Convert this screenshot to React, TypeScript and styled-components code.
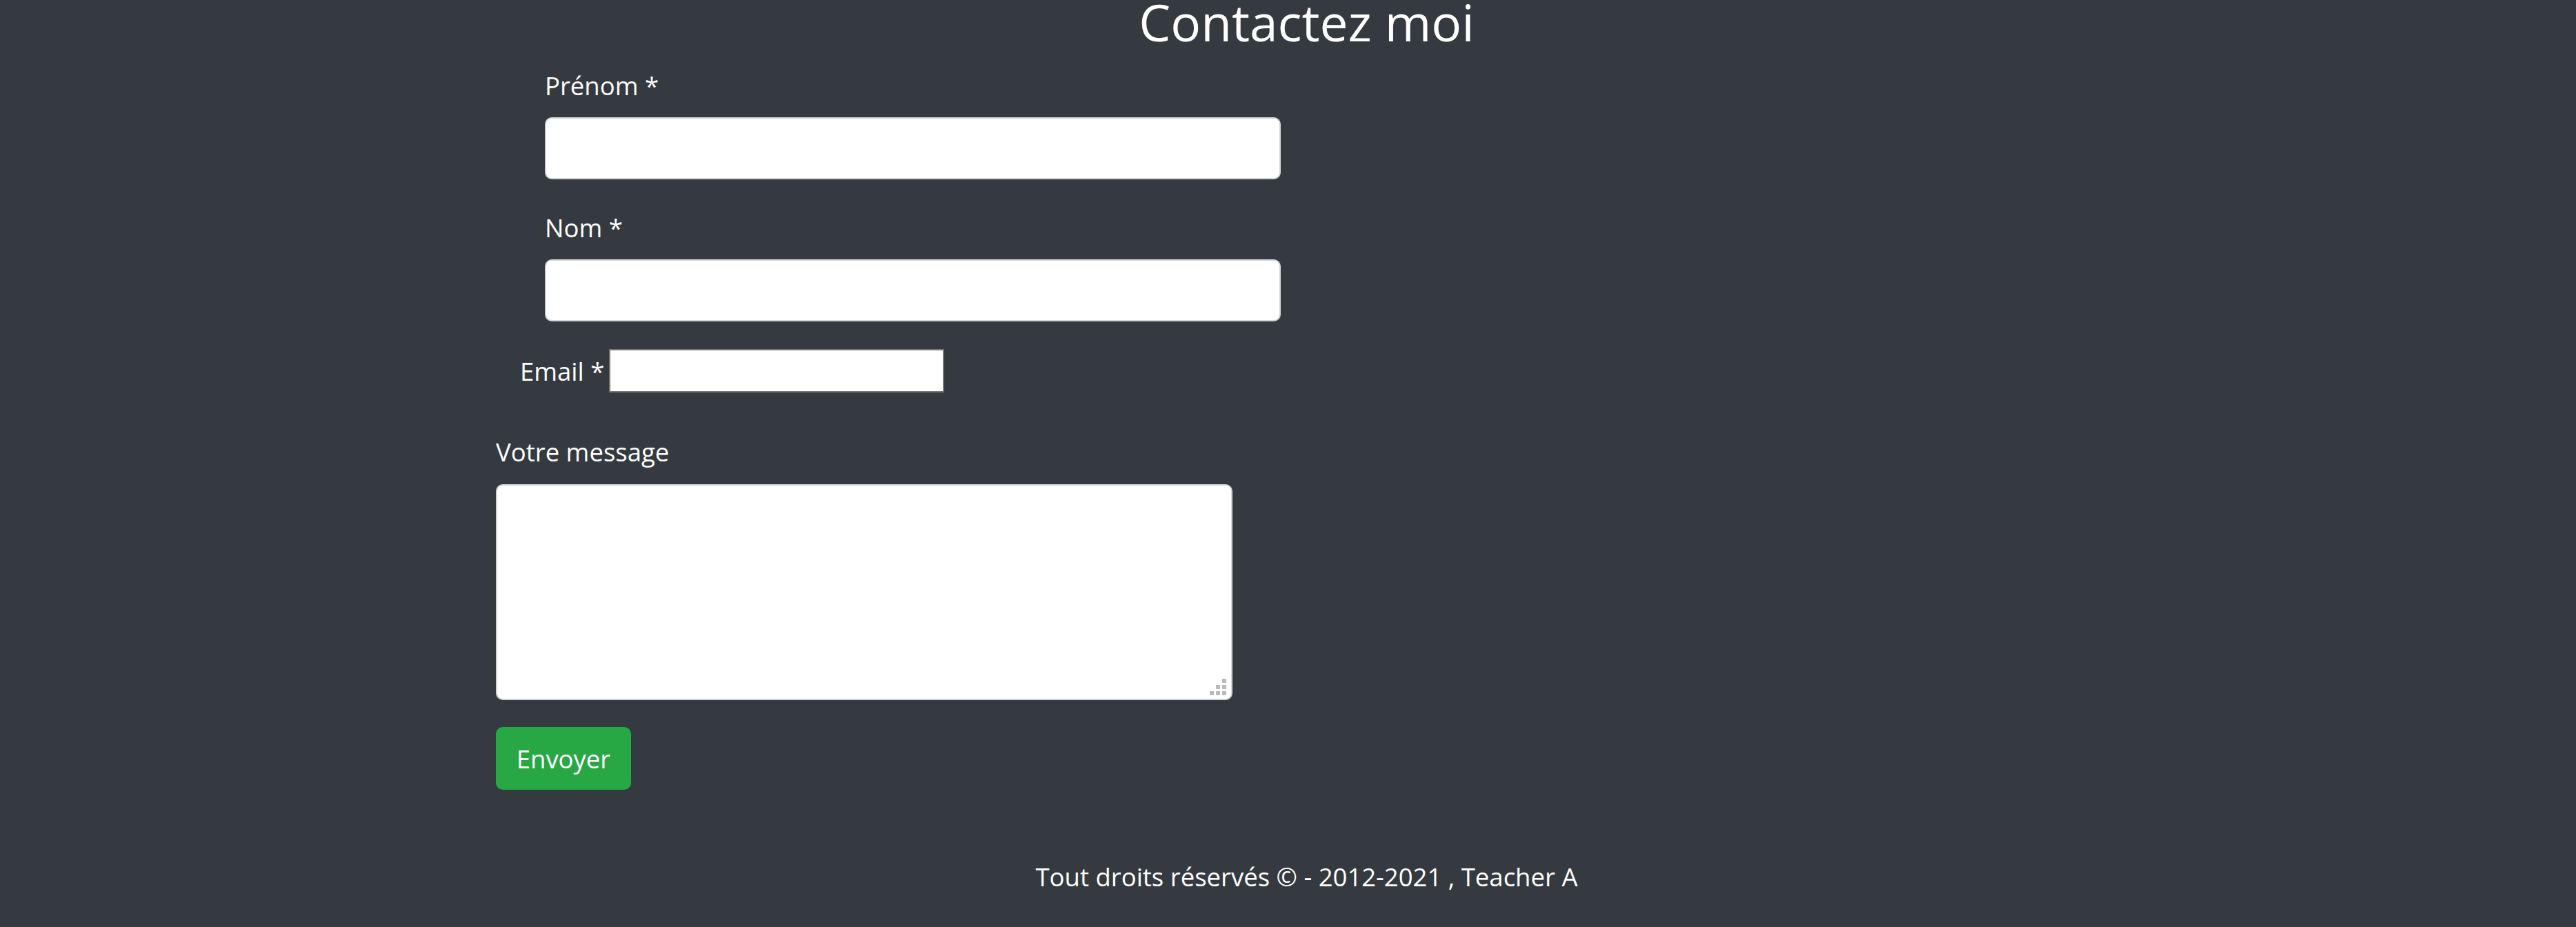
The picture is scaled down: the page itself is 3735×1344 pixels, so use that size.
import React from "react";
import styled, { createGlobalStyle } from "styled-components";

const GlobalStyle = createGlobalStyle`
  html, body {
    margin: 0;
    padding: 0;
    background: #343a40;
  }
  body {
    font-family: "Open Sans", "Noto Sans", sans-serif;
    color: #ffffff;
    overflow: hidden;
  }
  * { box-sizing: border-box; }
`;

const Page = styled.div`
  min-height: 1344px;
  padding-left: 54px;
  display: flex;
  flex-direction: column;
`;

const Title = styled.h2`
  margin: 0;
  font-size: 73px;
  line-height: 63px;
  font-weight: 400;
  text-align: center;
  color: #ffffff;
`;

const Form = styled.form`
  margin: 31px 0 0 665px;
  display: flex;
  flex-direction: column;
  align-items: flex-start;
`;

const Group = styled.div<{ $indent: number; $after: number }>`
  display: flex;
  flex-direction: column;
  align-items: flex-start;
  padding-left: ${(p) => p.$indent}px;
  margin-bottom: ${(p) => p.$after}px;
`;

const Label = styled.label<{ $below?: number }>`
  display: block;
  font-size: 36.5px;
  line-height: 57.6px;
  padding-top: 2px;
  color: #ffffff;
  margin-bottom: ${(p) => (p.$below ?? 0) - 2}px;
  white-space: nowrap;
`;

const TextInput = styled.input`
  width: 1067px;
  height: 90px;
  background: #ffffff;
  border: 2px solid #ced4da;
  border-radius: 10px;
  padding: 0 30px;
  font: inherit;
  font-size: 36.5px;
  color: #495057;
  outline: none;
`;

const EmailRow = styled.div`
  display: flex;
  align-items: center;
  height: 63px;
  padding-left: 35px;
  margin-bottom: 56px;
`;

const InlineLabel = styled.label`
  width: 129px;
  padding-top: 3px;
  font-size: 36.5px;
  line-height: 57.6px;
  color: #ffffff;
  white-space: nowrap;
`;

const PlainInput = styled.input`
  width: 486px;
  height: 63px;
  background: #ffffff;
  border: 2px solid #767676;
  border-radius: 0;
  padding: 0 6px;
  font-size: 32px;
  outline: none;
`;

const AreaWrap = styled.div`
  position: relative;
  width: 1068px;
  height: 313px;
`;

const TextArea = styled.textarea`
  display: block;
  width: 100%;
  height: 100%;
  background: #ffffff;
  border: 2px solid #ced4da;
  border-radius: 10px;
  padding: 14px 30px;
  font: inherit;
  font-size: 36.5px;
  resize: none;
  outline: none;
`;

const Grip = styled.svg`
  position: absolute;
  right: 9px;
  bottom: 7px;
  width: 24px;
  height: 24px;
  pointer-events: none;
`;

const SendButton = styled.button`
  width: 196px;
  height: 91px;
  background: #28a745;
  border: 2px solid #28a745;
  border-radius: 10px;
  color: #ffffff;
  font-family: inherit;
  font-size: 36.5px;
  line-height: 57.6px;
  padding: 3px 0 0;
  cursor: pointer;
`;

const Footer = styled.footer`
  margin-top: 98px;
  font-size: 36.5px;
  line-height: 57.6px;
  text-align: center;
  color: #ffffff;
`;

const gripSquares: [number, number][] = [
  [18, 0],
  [9, 9],
  [18, 9],
  [0, 18],
  [9, 18],
  [18, 18],
];

export default function App() {
  return (
    <>
      <GlobalStyle />
      <Page>
        <Title>Contactez moi</Title>
        <Form onSubmit={(e) => e.preventDefault()}>
          <Group $indent={71} $after={40}>
            <Label htmlFor="prenom" $below={18.4}>Prénom *</Label>
            <TextInput id="prenom" type="text" />
          </Group>
          <Group $indent={71} $after={40}>
            <Label htmlFor="nom" $below={18.4}>Nom *</Label>
            <TextInput id="nom" type="text" />
          </Group>
          <EmailRow>
            <InlineLabel htmlFor="email">Email *</InlineLabel>
            <PlainInput id="email" type="email" />
          </EmailRow>
          <Group $indent={0} $after={39}>
            <Label htmlFor="message" $below={19.4}>Votre message</Label>
            <AreaWrap>
              <TextArea id="message" />
              <Grip viewBox="0 0 24 24">
                {gripSquares.map(([x, y]) => (
                  <rect key={`${x}-${y}`} x={x} y={y} width={6} height={6} fill="#bbbbbb" />
                ))}
              </Grip>
            </AreaWrap>
          </Group>
          <SendButton type="submit">Envoyer</SendButton>
        </Form>
        <Footer>Tout droits réservés © - 2012-2021 , Teacher A</Footer>
      </Page>
    </>
  );
}
